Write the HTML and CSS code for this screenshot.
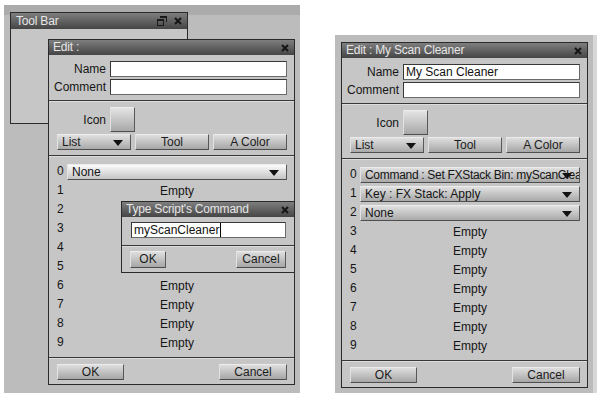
FILE: index.html
```html
<!DOCTYPE html>
<html lang="en">
<head>
  <meta charset="UTF-8" />
  <title>Tool Bar - Edit</title>
  <link rel="stylesheet" href="styles.css">
</head>
<body>
  <div class="screens">

    <!-- Pantalla izquierda: barra de herramientas + edición + diálogo -->
    <div class="desk desk-left">
      <div class="win toolbar">
        <div class="titlebar tall">
          <span>Tool Bar</span>
          <span class="title-tools">
            <svg width="10" height="10" viewBox="0 0 10 10"><path d="M3 0h7v6H9V2H3z" fill="#1a1a1a"/><path d="M0 3h7v7H0z M1 5v4h5V5z" fill="#1a1a1a" fill-rule="evenodd"/></svg>
            <svg class="close" width="8" height="8" viewBox="0 0 8 8"><path d="M1 1l6 6M7 1L1 7" stroke="#151515" stroke-width="2"/></svg>
          </span>
        </div>
      </div>

      <div class="win edit">
        <div class="titlebar">
          <span>Edit :</span>
          <svg class="close" width="8" height="8" viewBox="0 0 8 8"><path d="M1 1l6 6M7 1L1 7" stroke="#151515" stroke-width="2"/></svg>
        </div>
        <div class="fields">
          <label>Name</label><div class="input"></div>
          <label>Comment</label><div class="input"></div>
        </div>
        <div class="section look">
          <div class="icon-row"><label>Icon</label><div class="btn icon-btn"></div></div>
          <div class="btn-row">
            <div class="btn select">List<svg class="arrow" width="10" height="6" viewBox="0 0 10 6"><path d="M0 0h10L5 6z" fill="#111"/></svg></div>
            <div class="btn">Tool</div>
            <div class="btn">A Color</div>
          </div>
        </div>
        <div class="section slots">
          <div class="slot"><span class="num">0</span><div class="select light">None<svg class="arrow" width="10" height="6" viewBox="0 0 10 6"><path d="M0 0h10L5 6z" fill="#111"/></svg></div></div>
          <div class="slot"><span class="num">1</span><span class="empty">Empty</span></div>
          <!-- filas 2-5 quedan tapadas por el diálogo -->
          <div class="slot"><span class="num">2</span><span></span></div>
          <div class="slot"><span class="num">3</span><span></span></div>
          <div class="slot"><span class="num">4</span><span></span></div>
          <div class="slot"><span class="num">5</span><span></span></div>
          <div class="slot"><span class="num">6</span><span class="empty">Empty</span></div>
          <div class="slot"><span class="num">7</span><span class="empty">Empty</span></div>
          <div class="slot"><span class="num">8</span><span class="empty">Empty</span></div>
          <div class="slot"><span class="num">9</span><span class="empty">Empty</span></div>
        </div>
        <div class="section footer">
          <div class="btn ok">OK</div>
          <div class="btn cancel">Cancel</div>
        </div>
      </div>

      <div class="win dialog">
        <div class="titlebar">
          <span>Type Script's Command</span>
          <svg class="close" width="8" height="8" viewBox="0 0 8 8"><path d="M1 1l6 6M7 1L1 7" stroke="#151515" stroke-width="2"/></svg>
        </div>
        <div class="dialog-body">
          <div class="input"><span class="caret">myScanCleaner</span></div>
        </div>
        <div class="section dialog-footer">
          <div class="btn small-ok">OK</div>
          <div class="btn small-cancel">Cancel</div>
        </div>
      </div>
    </div>

    <!-- Pantalla derecha: edición rellena -->
    <div class="desk desk-right">
      <div class="win edit">
        <div class="titlebar">
          <span>Edit : My Scan Cleaner</span>
          <svg class="close" width="8" height="8" viewBox="0 0 8 8"><path d="M1 1l6 6M7 1L1 7" stroke="#151515" stroke-width="2"/></svg>
        </div>
        <div class="fields">
          <label>Name</label><div class="input">My Scan Cleaner</div>
          <label>Comment</label><div class="input"></div>
        </div>
        <div class="section look">
          <div class="icon-row"><label>Icon</label><div class="btn icon-btn"></div></div>
          <div class="btn-row">
            <div class="btn select">List<svg class="arrow" width="10" height="6" viewBox="0 0 10 6"><path d="M0 0h10L5 6z" fill="#111"/></svg></div>
            <div class="btn">Tool</div>
            <div class="btn">A Color</div>
          </div>
        </div>
        <div class="section slots">
          <div class="slot"><span class="num">0</span><div class="select tight">Command : Set FXStack Bin: myScanCleaner<svg class="arrow" width="10" height="6" viewBox="0 0 10 6"><path d="M0 0h10L5 6z" fill="#111"/></svg></div></div>
          <div class="slot"><span class="num">1</span><div class="select">Key : FX Stack: Apply<svg class="arrow" width="10" height="6" viewBox="0 0 10 6"><path d="M0 0h10L5 6z" fill="#111"/></svg></div></div>
          <div class="slot"><span class="num">2</span><div class="select">None<svg class="arrow" width="10" height="6" viewBox="0 0 10 6"><path d="M0 0h10L5 6z" fill="#111"/></svg></div></div>
          <div class="slot"><span class="num">3</span><span class="empty">Empty</span></div>
          <div class="slot"><span class="num">4</span><span class="empty">Empty</span></div>
          <div class="slot"><span class="num">5</span><span class="empty">Empty</span></div>
          <div class="slot"><span class="num">6</span><span class="empty">Empty</span></div>
          <div class="slot"><span class="num">7</span><span class="empty">Empty</span></div>
          <div class="slot"><span class="num">8</span><span class="empty">Empty</span></div>
          <div class="slot"><span class="num">9</span><span class="empty">Empty</span></div>
        </div>
        <div class="section footer">
          <div class="btn ok">OK</div>
          <div class="btn cancel">Cancel</div>
        </div>
      </div>
    </div>

  </div>
</body>
</html>
```

FILE: styles.css
```css
* {
  box-sizing: border-box;
}

body {
  margin: 0;
  background: #fff;
  font-family: "Liberation Sans", Arial, sans-serif;
  font-size: 12px;
  color: #151515;
}

.screens {
  display: flex;
  align-items: flex-start;
}

.desk {
  background: #bcbcbc;
}

.desk-left {
  position: relative;
  width: 296px;
  height: 388px;
  margin: 5px 0 0 4px;
  background: linear-gradient(#ababab 0 10px, #bcbcbc 10px);
}

.desk-right {
  width: 258px;
  height: 358px;
  margin: 35px 0 0 35px;
  padding: 7px 0 0 6px;
  box-shadow: 4px 0 0 #d8d8d8;
}

/* Ventanas */
.win {
  display: flex;
  flex-direction: column;
  background: #c6c6c6;
  border: 1px solid #2a2a2a;
}

.desk-left .win {
  position: absolute;
}

.toolbar {
  left: 6px;
  top: 7px;
  width: 178px;
  height: 112px;
}

.edit {
  width: 247px;
  height: 346px;
}

.desk-left .edit {
  left: 44px;
  top: 34px;
}

.dialog {
  left: 117px;
  top: 196px;
  width: 174px;
  height: 72px;
}

.titlebar {
  flex: none;
  height: 15px;
  display: flex;
  align-items: center;
  justify-content: space-between;
  padding: 0 5px 0 4px;
  background: linear-gradient(#7e7e7e, #454545);
  color: #e6e6e6;
  line-height: 15px;
  letter-spacing: -0.2px;
}

.titlebar.tall {
  height: 16px;
  padding-left: 5px;
}

.title-tools {
  display: flex;
  align-items: center;
  gap: 7px;
}

.close {
  display: block;
}

/* Secciones */
.section {
  border-top: 1px solid #383838;
  box-shadow: inset 0 1px #dcdcdc;
}

.fields {
  display: grid;
  grid-template-columns: 54px 1fr;
  column-gap: 4px;
  row-gap: 2px;
  align-items: center;
  padding: 6px 7px 5px 3px;
}

label {
  text-align: right;
  line-height: 16px;
}

.input {
  height: 16px;
  background: #fff;
  border: 1px solid #383838;
  border-right-color: #6a6a6a;
  border-bottom-color: #6a6a6a;
  padding-left: 2px;
  line-height: 14px;
  color: #111;
  white-space: nowrap;
  overflow: hidden;
}

.look {
  padding: 6px 7px 5px 3px;
}

.icon-row {
  display: grid;
  grid-template-columns: 54px 25px;
  column-gap: 4px;
  align-items: center;
}

.btn-row {
  display: grid;
  grid-template-columns: repeat(3, 1fr);
  gap: 4px;
  margin: 2px 0 0 5px;
}

.btn {
  position: relative;
  height: 16px;
  line-height: 14px;
  text-align: center;
  background: linear-gradient(#dedede, #a6a6a6);
  border: 1px solid;
  border-color: #ececec #585858 #4e4e4e #e2e2e2;
  color: #1c1c1c;
}

.icon-btn {
  width: 25px;
  height: 25px;
  background: linear-gradient(#e4e4e4, #a8a8a8);
}

.btn.select {
  text-align: left;
  padding-left: 4px;
}

.arrow {
  position: absolute;
  right: 7px;
  top: 5px;
}

.slots {
  padding: 6px 7px 5px 8px;
}

.slot {
  display: grid;
  grid-template-columns: 10px 1fr;
  align-items: center;
  height: 19px;
}

.num {
  line-height: 19px;
}

.empty {
  text-align: center;
}

.select {
  position: relative;
  height: 16px;
  line-height: 14px;
  padding-left: 4px;
  white-space: nowrap;
  overflow: hidden;
  background: linear-gradient(#e0e0e0, #a9a9a9);
  border: 1px solid;
  border-color: #ececec #585858 #4e4e4e #e2e2e2;
}

.select.light {
  background: linear-gradient(#fbfbfb, #c4c4c4);
}

.select.tight {
  letter-spacing: -0.3px;
}

.footer {
  display: flex;
  justify-content: space-between;
  padding: 6px 7px 0 8px;
}

.ok {
  width: 67px;
}

.cancel {
  width: 68px;
}

/* Diálogo */
.dialog-body {
  padding: 5px 8px 7px 9px;
}

.caret {
  border-right: 1px solid #000;
  padding-right: 1px;
}

.dialog-footer {
  display: flex;
  justify-content: space-between;
  padding: 5px 8px 0 8px;
}

.dialog-footer .btn {
  height: 17px;
  line-height: 15px;
}

.small-ok {
  width: 36px;
}

.small-cancel {
  width: 50px;
}
```
